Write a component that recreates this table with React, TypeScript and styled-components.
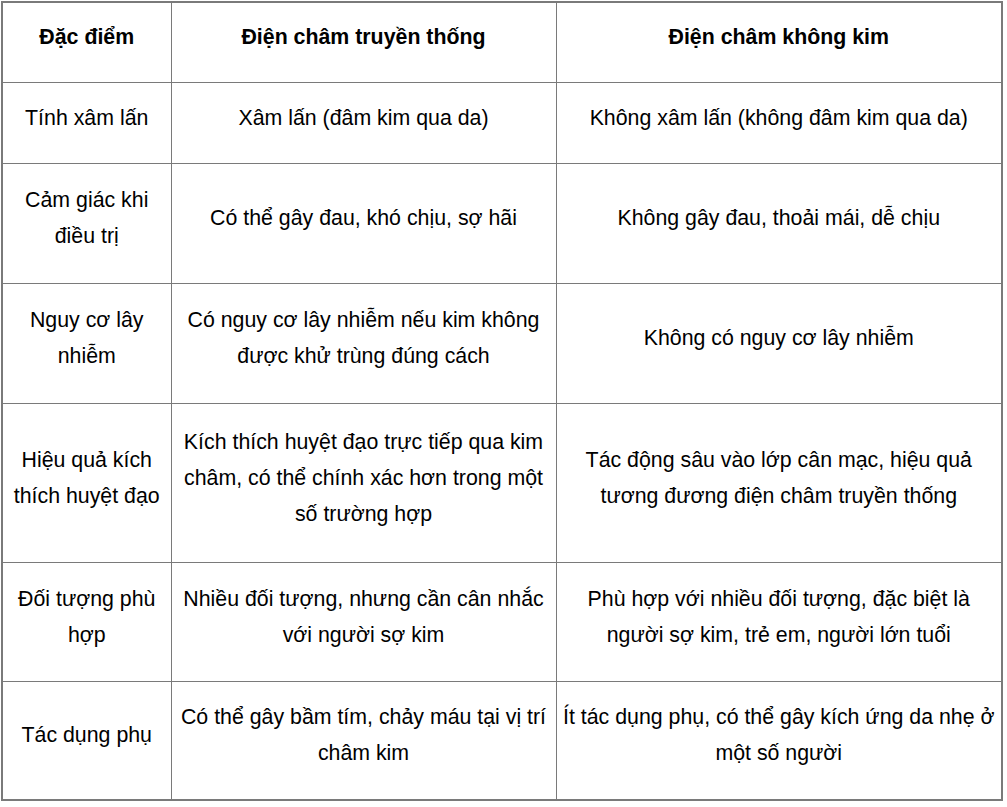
import { createGlobalStyle, styled } from "styled-components";

type Row = {
  feature: string;
  traditional: string;
  needleless: string;
  height: number;
};

const rows: Row[] = [
  {
    feature: "Tính xâm lấn",
    traditional: "Xâm lấn (đâm kim qua da)",
    needleless: "Không xâm lấn (không đâm kim qua da)",
    height: 81,
  },
  {
    feature: "Cảm giác khi điều trị",
    traditional: "Có thể gây đau, khó chịu, sợ hãi",
    needleless: "Không gây đau, thoải mái, dễ chịu",
    height: 120,
  },
  {
    feature: "Nguy cơ lây nhiễm",
    traditional: "Có nguy cơ lây nhiễm nếu kim không được khử trùng đúng cách",
    needleless: "Không có nguy cơ lây nhiễm",
    height: 120,
  },
  {
    feature: "Hiệu quả kích thích huyệt đạo",
    traditional:
      "Kích thích huyệt đạo trực tiếp qua kim châm, có thể chính xác hơn trong một số trường hợp",
    needleless:
      "Tác động sâu vào lớp cân mạc, hiệu quả tương đương điện châm truyền thống",
    height: 159,
  },
  {
    feature: "Đối tượng phù hợp",
    traditional: "Nhiều đối tượng, nhưng cần cân nhắc với người sợ kim",
    needleless:
      "Phù hợp với nhiều đối tượng, đặc biệt là người sợ kim, trẻ em, người lớn tuổi",
    height: 119,
  },
  {
    feature: "Tác dụng phụ",
    traditional: "Có thể gây bầm tím, chảy máu tại vị trí châm kim",
    needleless: "Ít tác dụng phụ, có thể gây kích ứng da nhẹ ở một số người",
    height: 119,
  },
];

const GlobalStyle = createGlobalStyle`
  * {
    box-sizing: border-box;
  }

  body {
    margin: 0;
    background: #ffffff;
    font-family: "Liberation Sans", Arial, sans-serif;
    color: #000000;
  }
`;

const Page = styled.div`
  padding: 1px;
`;

const Table = styled.table`
  width: 1000px;
  border-collapse: collapse;
  table-layout: fixed;
  border: 2px solid #7a7a7a;
`;

const Col = styled.col<{ $width: number }>`
  width: ${({ $width }) => $width}px;
`;

const HeadRow = styled.tr`
  height: 80px;
`;

const HeadCell = styled.th`
  border: 1px solid #7a7a7a;
  padding: 0 6px 10px;
  font-size: 21.33px;
  font-weight: 700;
  line-height: 36px;
  text-align: center;
  vertical-align: middle;
`;

const BodyRow = styled.tr<{ $height: number }>`
  height: ${({ $height }) => $height}px;
`;

const Cell = styled.td`
  border: 1px solid #7a7a7a;
  padding: 0 6px 10px;
  font-size: 21.33px;
  line-height: 36px;
  text-align: center;
  vertical-align: middle;
`;

export default function App() {
  return (
    <Page>
      <GlobalStyle />
      <Table>
        <colgroup>
          <Col $width={169} />
          <Col $width={385} />
          <Col $width={446} />
        </colgroup>
        <thead>
          <HeadRow>
            <HeadCell>Đặc điểm</HeadCell>
            <HeadCell>Điện châm truyền thống</HeadCell>
            <HeadCell>Điện châm không kim</HeadCell>
          </HeadRow>
        </thead>
        <tbody>
          {rows.map((row) => (
            <BodyRow key={row.feature} $height={row.height}>
              <Cell>{row.feature}</Cell>
              <Cell>{row.traditional}</Cell>
              <Cell>{row.needleless}</Cell>
            </BodyRow>
          ))}
        </tbody>
      </Table>
    </Page>
  );
}
